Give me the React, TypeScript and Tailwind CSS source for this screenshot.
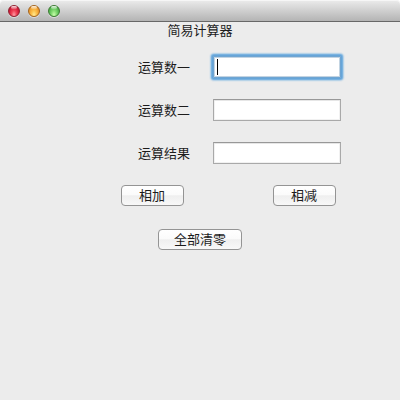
import clsx from "clsx";

const lights = [
  "border-[#8f2130] bg-[radial-gradient(ellipse_at_50%_90%,#ffa0a8_0%,#f04558_35%,#d01c38_70%,#a8182c_100%)]",
  "border-[#a3641c] bg-[radial-gradient(ellipse_at_50%_90%,#ffec96_0%,#fcc24c_35%,#ee9c30_70%,#c27420_100%)]",
  "border-[#3b7a32] bg-[radial-gradient(ellipse_at_50%_90%,#ccffae_0%,#86dc74_35%,#56b950_70%,#39843a_100%)]",
];

const TitleBar = () => (
  <div className="flex h-[22px] items-center gap-2 rounded-t-[4px] border-b border-[#686868] bg-linear-to-b from-[#ececec] to-[#b4b4b4] pl-2 shadow-[inset_0_1px_0_#f6f6f6]">
    {lights.map((light) => (
      <div
        key={light}
        className={clsx(
          "flex size-3 justify-center rounded-full border shadow-[0_1px_0_rgba(255,255,255,0.45)]",
          light
        )}
      >
        <div className="h-[3px] w-1.5 rounded-full bg-linear-to-b from-white/85 to-white/20" />
      </div>
    ))}
  </div>
);

const Field = ({ label, focused }: { label: string; focused?: boolean }) => (
  <div className="flex h-[22px] items-center">
    <span className="w-[75px]">{label}</span>
    <div
      className={clsx(
        "flex h-[22px] w-32 items-center border bg-white pl-[3px]",
        focused
          ? "rounded-[1px] border-[#6fa5d3] shadow-[0_0_0_1px_#66a5d8,0_0_2px_2px_#6aaade,0_0_2px_2px_#8fc0e6,inset_0_0_0_1px_#c3d4e2]"
          : "border-[#a9a9a9] border-t-[#989898] shadow-[inset_0_1px_0_#e6e6e6,inset_0_0_0_1px_#f1f1f1]"
      )}
    >
      {focused && <div className="h-4 w-px bg-black" />}
    </div>
  </div>
);

const Button = ({ text, className }: { text: string; className: string }) => (
  <button
    className={clsx(
      "flex h-[21px] items-center justify-center rounded-[4px] border border-[#949494] bg-[linear-gradient(#ffffff_0%,#fbfbfb_45%,#efefef_52%,#f8f8f8_100%)]",
      className
    )}
  >
    {text}
  </button>
);

const App = () => {
  return (
    <div className="h-[400px] w-[400px] bg-white font-['Liberation_Sans','Noto_Sans_CJK_SC',sans-serif] text-[13px] leading-[17px] text-[#1c1c1c]">
      <TitleBar />
      <div className="h-[378px] bg-[#ececec]">
        <h1 className="text-center">简易计算器</h1>
        <div className="flex flex-col gap-[21px] pt-[17px] pl-[138px]">
          <Field label="运算数一" focused />
          <Field label="运算数二" />
          <Field label="运算结果" />
        </div>
        <div className="flex justify-between pt-[21px] pr-16 pl-[121px]">
          <Button text="相加" className="w-[63px] pr-px pb-px" />
          <Button text="相减" className="w-[63px] pr-px pb-px" />
        </div>
        <div className="flex justify-center pt-[23px]">
          <Button text="全部清零" className="w-[84px] pb-px" />
        </div>
      </div>
    </div>
  );
};

export default App;
